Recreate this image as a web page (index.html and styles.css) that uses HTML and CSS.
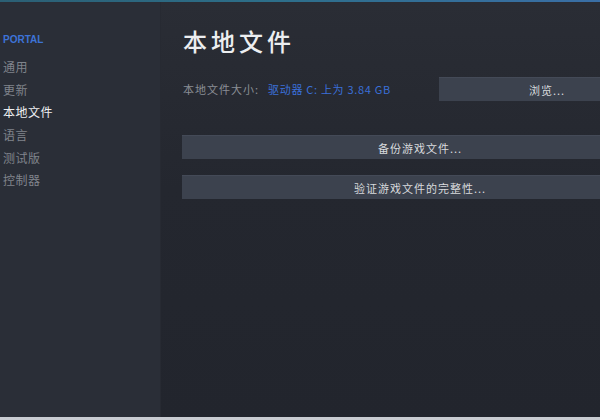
FILE: index.html
```html
<!DOCTYPE html>
<html lang="zh">
<head>
<meta charset="utf-8">
<link rel="stylesheet" href="styles.css">
</head>
<body>
<div class="topbar"></div>
<div class="app">
  <nav class="sidebar">
    <div class="game">PORTAL</div>
    <div class="item">通用</div>
    <div class="item">更新</div>
    <div class="item active">本地文件</div>
    <div class="item">语言</div>
    <div class="item">测试版</div>
    <div class="item">控制器</div>
  </nav>
  <main class="content">
    <h1 class="title">本地文件</h1>
    <div class="size-row">
      <div class="size-label">本地文件大小:</div>
      <div class="size-value">驱动器 C: 上为 3.84 GB</div>
      <div class="btn browse">浏览...</div>
    </div>
    <div class="btn wide first">备份游戏文件...</div>
    <div class="btn wide">验证游戏文件的完整性...</div>
  </main>
</div>
<div class="bottombar"></div>
</body>
</html>
```
FILE: styles.css
```css
html, body {
  margin: 0;
  padding: 0;
  width: 600px;
  height: 420px;
  overflow: hidden;
  background: #23262e;
  font-family: "Noto Sans CJK SC", "Noto Sans", sans-serif;
}
.topbar {
  height: 2px;
  background: linear-gradient(90deg, #2b5f74 0%, #2d6f8a 45%, #3a6fa6 100%);
}
.app {
  display: flex;
  height: 415px;
}
.sidebar {
  width: 161px;
  flex: none;
  background: #2a2e37;
  padding-top: 31px;
  box-sizing: border-box;
  border-right: 1px solid #272a32;
}
.game {
  padding-left: 3px;
  font-family: "Liberation Sans", Arial, sans-serif;
  font-size: 10px;
  font-weight: bold;
  color: #3d73d6;
  height: 14px;
  line-height: 14px;
  margin-bottom: 12px;
}
.item {
  padding-left: 3px;
  font-size: 12px;
  height: 22.7px;
  line-height: 16px;
  color: #80848c;
  letter-spacing: 0.5px;
}
.item.active {
  color: #eef0f2;
}
.content {
  flex: 1;
  min-width: 0;
  padding-left: 22px;
  box-sizing: border-box;
  background: linear-gradient(180deg, #2a2d35 0%, #24272f 45%, #22252d 100%);
}
.title {
  margin: 22px 0 0 0;
  font-size: 24px;
  font-weight: 500;
  color: #eceef0;
  height: 34px;
  line-height: 34px;
  letter-spacing: 4px;
}
.size-row {
  display: flex;
  align-items: center;
  margin-top: 19px;
  height: 24px;
}
.size-label {
  font-size: 11px;
  color: #8a8e95;
  width: 85px;
  letter-spacing: 1px;
  white-space: nowrap;
}
.size-value {
  font-size: 11px;
  color: #3a6fd8;
  width: 171px;
  letter-spacing: 0.7px;
  white-space: nowrap;
}
.btn {
  background: #3c424e;
  border-top: 1px solid #444a57;
  box-sizing: border-box;
  color: #d8dadd;
  font-size: 11px;
  letter-spacing: 1px;
  display: flex;
  align-items: center;
  justify-content: center;
}
.browse {
  flex: 1;
  height: 24px;
  padding-left: 55px;
}
.wide {
  height: 24px;
  margin-left: -1px;
  padding-left: 58px;
}
.wide.first {
  margin-top: 34px;
  margin-bottom: 16px;
}
.bottombar {
  height: 3px;
  background: #c9ccd2;
}
```
